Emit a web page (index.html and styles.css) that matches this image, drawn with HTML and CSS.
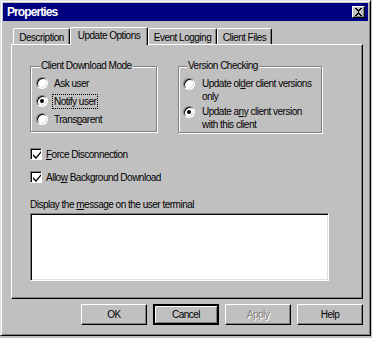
FILE: index.html
```html
<!DOCTYPE html>
<html>
<head>
<meta charset="utf-8">
<link rel="stylesheet" href="styles.css">
</head>
<body>
<div class="window">
  <div class="titlebar">
    <span class="title">Properties</span>
    <span class="close"><svg width="9" height="8" viewBox="0 0 9 8"><path d="M1 0h2v1h1v1h1V1h1V0h2v1H7v1H6v1H5v2h1v1h1v1h1v1H6V7H5V6H4v1H3v1H1V7h1V6h1V5h1V3H3V2H2V1H1z" fill="#000"/></svg></span>
  </div>
  <div class="tabs">
    <div class="tab t1">Description</div>
    <div class="tab t2 active">Update Options</div>
    <div class="tab t3">Event Logging</div>
    <div class="tab t4">Client Files</div>
  </div>
  <div class="panel">
    <div class="groups">
      <fieldset class="group g1">
        <legend>Client Download Mode</legend>
        <div class="radio-row"><span class="radio"></span><span class="lbl">Ask user</span></div>
        <div class="radio-row"><span class="radio on"></span><span class="lbl focus">Notify user</span></div>
        <div class="radio-row"><span class="radio"></span><span class="lbl">Trans<u>p</u>arent</span></div>
      </fieldset>
      <fieldset class="group g2">
        <legend>Version Checking</legend>
        <div class="radio-row2"><span class="radio"></span><span class="lbl2">Update ol<u>d</u>er client versions<br>only</span></div>
        <div class="radio-row2"><span class="radio on"></span><span class="lbl2">Update a<u>n</u>y client version<br>with this client</span></div>
      </fieldset>
    </div>
    <div class="check-row first"><span class="checkbox"><svg width="8" height="8" viewBox="0 0 8 8"><path d="M0 3l3 3 5-6v2L3 8 0 5z" fill="#000"/></svg></span><span><u>F</u>orce Disconnection</span></div>
    <div class="check-row"><span class="checkbox"><svg width="8" height="8" viewBox="0 0 8 8"><path d="M0 3l3 3 5-6v2L3 8 0 5z" fill="#000"/></svg></span><span>Allo<u>w</u> Background Download</span></div>
    <div class="msg-label">Display the <u>m</u>essage on the user terminal</div>
    <div class="textarea"></div>
  </div>
  <div class="buttons">
    <div class="btn">OK</div>
    <div class="btn default">Cancel</div>
    <div class="btn disabled">Apply</div>
    <div class="btn">Help</div>
  </div>
</div>
</body>
</html>
```
FILE: styles.css
```css
html, body {
  margin: 0;
  padding: 0;
  background: #c0c0c0;
}
body {
  font-family: "Liberation Sans", Arial, sans-serif;
  font-size: 10px;
  letter-spacing: -0.5px;
  color: #000;
  white-space: nowrap;
}
.window {
  width: 371px;
  height: 336px;
  box-sizing: border-box;
  background: #c0c0c0;
  border: 1px solid;
  border-color: #dfdfdf #000 #000 #dfdfdf;
  box-shadow: inset 1px 1px #fff, inset -1px -1px #808080;
  padding: 2px;
}
.titlebar {
  height: 18px;
  background: #000080;
  color: #fff;
  display: flex;
  align-items: center;
  justify-content: space-between;
  padding: 0 3px 0 4px;
}
.title {
  font-weight: bold;
  font-size: 12px;
  letter-spacing: -0.9px;
}
.close {
  width: 13px;
  height: 12px;
  box-sizing: border-box;
  background: #c0c0c0;
  border: 1px solid;
  border-color: #fff #000 #000 #fff;
  box-shadow: inset -1px -1px #808080;
  display: flex;
  align-items: center;
  justify-content: center;
}
.tabs {
  display: flex;
  align-items: flex-end;
  height: 23px;
  margin-left: 10px;
  position: relative;
  z-index: 1;
}
.tab {
  height: 16px;
  box-sizing: border-box;
  border: 1px solid;
  border-bottom: none;
  border-color: #fff #000 transparent #fff;
  box-shadow: inset -1px 0 #808080;
  border-radius: 2px 2px 0 0;
  display: flex;
  align-items: center;
  justify-content: center;
  padding-top: 1px;
}
.tab.active {
  height: 18px;
  margin-bottom: -1px;
  background: #c0c0c0;
  padding-bottom: 3px;
}
.t1 { width: 57px; }
.t2 { width: 78px; }
.t3 { width: 69px; }
.t4 { width: 55px; }
.panel {
  margin-left: 8px;
  width: 352px;
  height: 255px;
  box-sizing: border-box;
  border: 1px solid;
  border-color: #fff #000 #000 #fff;
  box-shadow: inset -1px -1px #808080;
  padding: 15px 0 0 18px;
}
.groups {
  display: flex;
  gap: 21px;
}
.group {
  margin: 0;
  box-sizing: border-box;
  border: 1px solid #808080;
  box-shadow: inset 1px 1px #fff, 1px 1px #fff;
  padding: 0;
}
.group legend {
  padding: 0 1px;
  margin-left: 4px;
  background: #c0c0c0;
  line-height: 12px;
}
.g1 {
  width: 127px;
  height: 72px;
  padding: 2px 0 0 5px;
}
.g2 {
  width: 144px;
  height: 73px;
  padding: 5px 0 0 4px;
}
.radio-row {
  display: flex;
  align-items: center;
  height: 18px;
  gap: 4px;
}
.radio-row2 {
  display: flex;
  align-items: flex-start;
  gap: 7px;
  line-height: 13px;
  margin-bottom: 2px;
}
.radio-row2 .radio {
  margin-top: 0.5px;
}
.radio {
  width: 12px;
  height: 12px;
  box-sizing: border-box;
  border-radius: 50%;
  background: #fff;
  border: 1px solid;
  border-color: #808080 #fff #fff #808080;
  box-shadow: inset 1px 1px #000, inset -1px -1px #dfdfdf;
  flex: none;
  display: flex;
  align-items: center;
  justify-content: center;
}
.radio.on::after {
  content: "";
  width: 4px;
  height: 4px;
  border-radius: 50%;
  background: #000;
}
.lbl {
  padding: 0 1px;
  line-height: 13px;
  border: 1px dotted transparent;
}
.lbl.focus {
  border-color: #000;
}
.check-row {
  display: flex;
  align-items: center;
  gap: 4px;
  height: 16px;
  margin-top: 7px;
}
.check-row.first {
  margin-top: 13px;
}
.checkbox {
  width: 12px;
  height: 12px;
  box-sizing: border-box;
  background: #fff;
  border: 1px solid;
  border-color: #808080 #fff #fff #808080;
  box-shadow: inset 1px 1px #000;
  display: flex;
  align-items: center;
  justify-content: center;
  padding: 1px 0 0 1px;
}
.msg-label {
  margin-top: 13px;
  line-height: 13px;
}
.textarea {
  margin-top: 2px;
  width: 299px;
  height: 68px;
  box-sizing: border-box;
  background: #fff;
  border: 1px solid;
  border-color: #808080 #fff #fff #808080;
  box-shadow: inset 1px 1px #000, inset -1px -1px #dfdfdf;
}
.buttons {
  display: flex;
  justify-content: flex-end;
  gap: 6px;
  margin-top: 5px;
  padding-right: 5px;
}
.btn {
  width: 66px;
  height: 21px;
  box-sizing: border-box;
  border: 1px solid;
  border-color: #fff #000 #000 #fff;
  box-shadow: inset -1px -1px #808080;
  display: flex;
  align-items: center;
  justify-content: center;
}
.btn.default {
  border: 2px solid #000;
  box-shadow: inset 1px 1px #fff, inset -1px -1px #808080;
}
.btn.disabled {
  color: #808080;
  text-shadow: 1px 1px #fff;
}
```
